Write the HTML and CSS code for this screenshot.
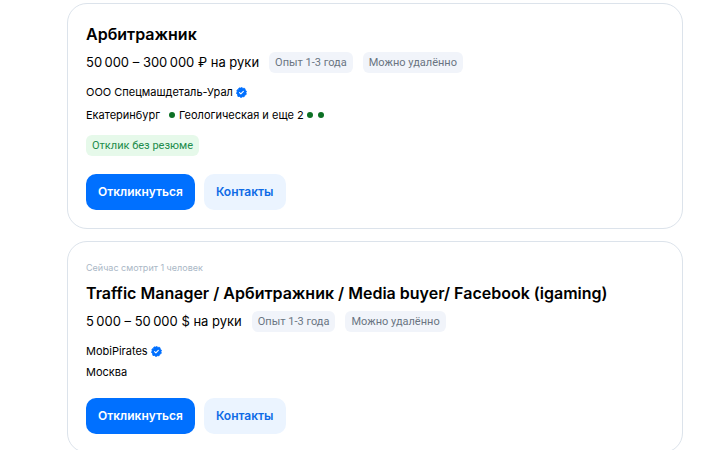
FILE: index.html
```
<!DOCTYPE html>
<html lang="ru">

<head>
    <meta charset="UTF-8">
    <meta name="viewport" content="width=device-width, initial-scale=1.0">
    <title>Вакансии</title>
    <link rel="stylesheet" href="styles.css">
</head>

<body>
    <svg class="sprite" aria-hidden="true">
        <symbol id="verified" viewBox="0 0 12 12">
            <path fill="#0070ff" d="M6 .5 7.6 1.5 9.5 1.5 10 3.3 11.4 4.5 10.8 6.2 11.2 8 9.6 8.9 8.8 10.6 7 10.6 5.4 11.5 4 10.4 2.1 10.3 1.8 8.4.6 7 1.3 5.3 1 3.5 2.6 2.6 3.4 1 5.2 1.2Z" stroke="#0070ff" stroke-linejoin="round" />
            <path fill="none" stroke="#fff" stroke-width="1.2" stroke-linecap="round" stroke-linejoin="round" d="M3.9 6.2 5.3 7.5 8 4.8" />
        </symbol>
    </svg>

    <main class="vacancies">
        <article class="card">
            <h2 class="title">Арбитражник</h2>
            <div class="summary">
                <span class="salary">50&#8239;000 – 300&#8239;000 ₽ на руки</span>
                <span class="tag">Опыт 1-3 года</span>
                <span class="tag">Можно удалённо</span>
            </div>
            <div class="company">
                <span>ООО Спецмашдеталь-Урал</span>
                <svg class="verified"><use href="#verified" /></svg>
            </div>
            <div class="address with-metro">
                <span>Екатеринбург</span>
                <span class="metro">
                    <span class="dot"></span>
                    <span>Геологическая и еще 2</span>
                </span>
                <span class="lines">
                    <span class="dot"></span>
                    <span class="dot"></span>
                </span>
            </div>
            <span class="tag tag-green">Отклик без резюме</span>
            <div class="actions">
                <button class="button primary" type="button">Откликнуться</button>
                <button class="button secondary" type="button">Контакты</button>
            </div>
        </article>

        <article class="card">
            <div class="viewers">Сейчас смотрит 1 человек</div>
            <h2 class="title">Traffic Manager / Арбитражник / Media buyer/ Facebook (igaming)</h2>
            <div class="summary">
                <span class="salary">5&#8239;000 – 50&#8239;000 $ на руки</span>
                <span class="tag">Опыт 1-3 года</span>
                <span class="tag">Можно удалённо</span>
            </div>
            <div class="company">
                <span>MobiPirates</span>
                <svg class="verified"><use href="#verified" /></svg>
            </div>
            <div class="address">Москва</div>
            <div class="actions">
                <button class="button primary" type="button">Откликнуться</button>
                <button class="button secondary" type="button">Контакты</button>
            </div>
        </article>
    </main>
</body>

</html>
```

FILE: styles.css
```
* {
    box-sizing: border-box;
}

body {
    margin: 0;
    background-color: #fff;
    color: #000;
    font-family: Inter, "Liberation Sans", sans-serif;
    font-size: 11px;
    line-height: 16px;
}

.sprite {
    display: none;
}

.vacancies {
    display: flex;
    flex-direction: column;
    gap: 12px;
    padding: 3px 19px 12px 67px;
}

.card {
    display: flex;
    flex-direction: column;
    align-items: flex-start;
    padding: 18px;
    border: 1px solid #dce3eb;
    border-radius: 20px;
}

.viewers {
    margin-bottom: 5px;
    color: #aab7c6;
    font-size: 9px;
}

.title {
    margin: 0 0 6px;
    font-size: 16px;
    font-weight: 600;
    line-height: 24px;
}

.summary {
    display: flex;
    flex-wrap: wrap;
    align-items: flex-start;
    gap: 10px;
    margin-bottom: 11px;
}

.salary {
    font-size: 13px;
    line-height: 20px;
}

.tag {
    padding: 0 6px;
    border-radius: 6px;
    background-color: #f1f4fa;
    color: #6a7482;
    font-family: Roboto, sans-serif;
    line-height: 21px;
}

.tag-green {
    margin-top: 10px;
    background-color: #e6f9ea;
    color: #218c4b;
}

.company {
    display: flex;
    align-items: center;
    gap: 3px;
    margin-bottom: 5px;
}

.verified {
    width: 11px;
    height: 11px;
}

/* город и станции метро */
.with-metro {
    display: flex;
    align-items: center;
    line-height: 20px;
}

.metro {
    display: flex;
    align-items: center;
    gap: 4px;
    margin-left: 9px;
}

.lines {
    display: flex;
    gap: 5px;
    margin-left: 3px;
}

.dot {
    width: 6px;
    height: 6px;
    border-radius: 50%;
    background-color: #0c7024;
}

.actions {
    display: flex;
    gap: 9px;
    margin-top: 18px;
}

.button {
    padding: 10px 12px;
    border: none;
    border-radius: 10px;
    font-family: inherit;
    font-size: 12px;
    font-weight: 600;
    line-height: 16px;
    cursor: pointer;
}

.primary {
    background-color: #0070ff;
    color: #fff;
}

.secondary {
    background-color: #ebf4ff;
    color: #0f6be6;
}
```
